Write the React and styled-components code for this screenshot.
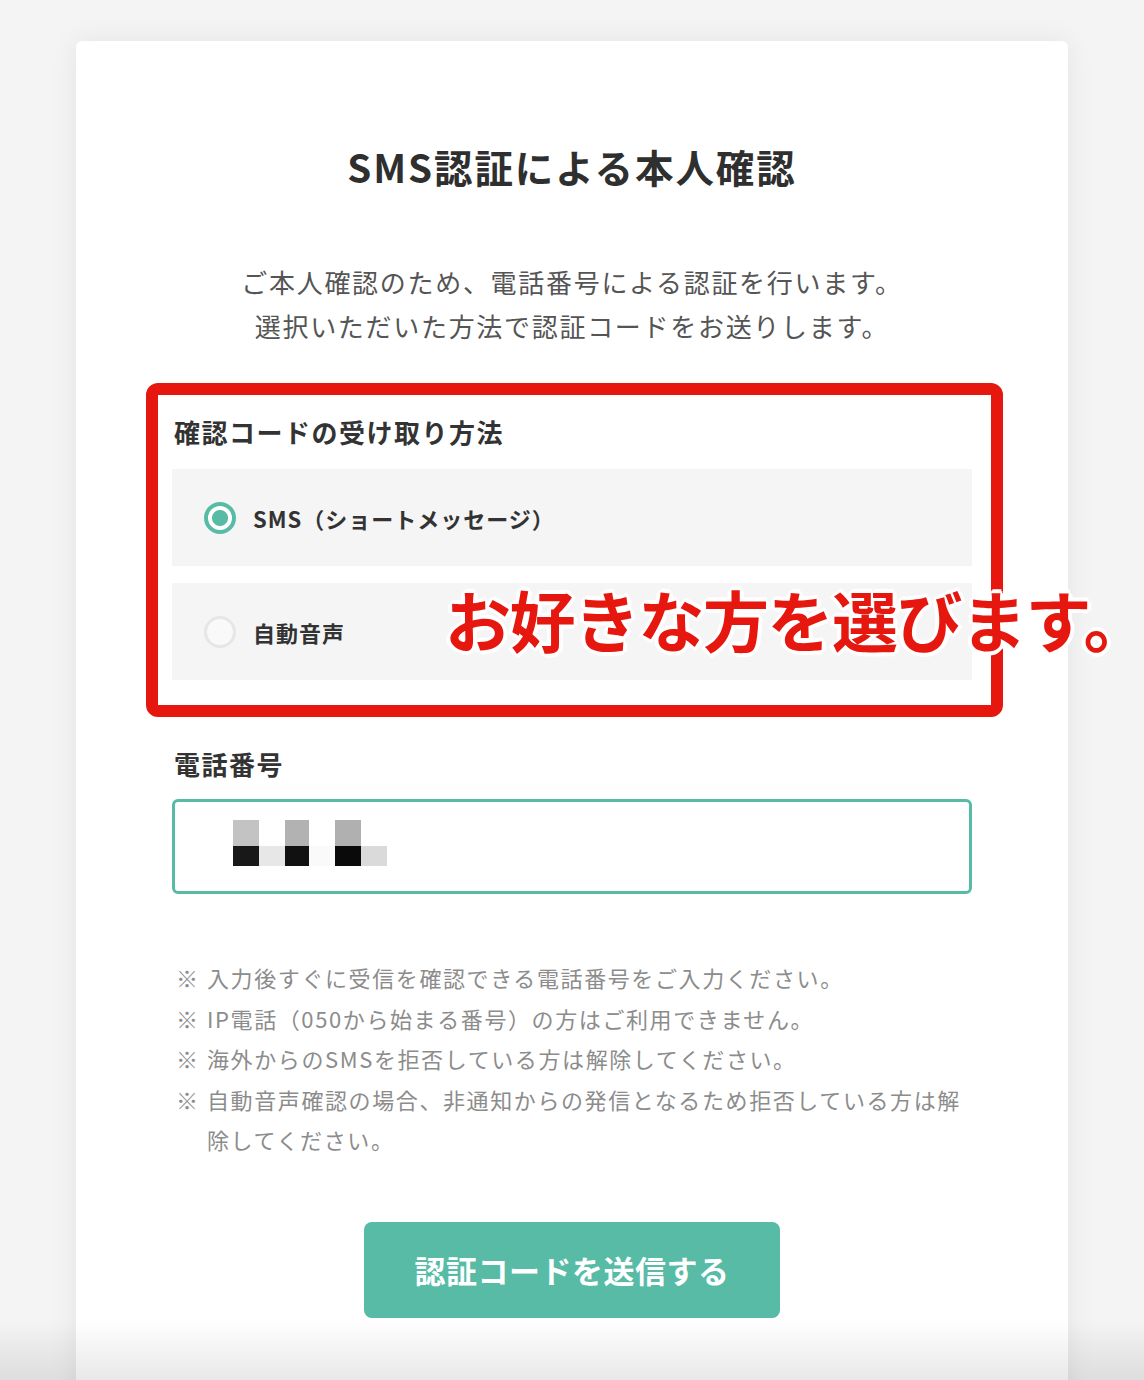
import { useState } from "react";
import styled, { createGlobalStyle } from "styled-components";

const GlobalStyle = createGlobalStyle`
  html, body {
    margin: 0;
    padding: 0;
    background: #f4f4f4;
  }
  body {
    font-family: "Noto Sans CJK JP", "Noto Sans", sans-serif;
    color: #333;
  }
`;

const METHODS = [
  { id: "sms", label: "SMS（ショートメッセージ）" },
  { id: "voice", label: "自動音声" },
];

const NOTES = [
  "入力後すぐに受信を確認できる電話番号をご入力ください。",
  "IP電話（050から始まる番号）の方はご利用できません。",
  "海外からのSMSを拒否している方は解除してください。",
  "自動音声確認の場合、非通知からの発信となるため拒否している方は解除してください。",
];

// blurred phone number, left to right, top row then bottom row
const MOSAIC = [
  "#c3c3c3", "#ffffff", "#b2b2b2", "#ffffff", "#b0b0b0", "#ffffff",
  "#181818", "#e7e7e7", "#111111", "#fafafa", "#0a0a0a", "#dadada",
];

export default function App() {
  const [method, setMethod] = useState("sms");

  return (
    <Page>
      <GlobalStyle />
      <Card>
        <Title>SMS認証による本人確認</Title>
        <Lead>
          ご本人確認のため、電話番号による認証を行います。
          <br />
          選択いただいた方法で認証コードをお送りします。
        </Lead>

        <MethodSection>
          <FieldLabel>確認コードの受け取り方法</FieldLabel>
          <Options>
            {METHODS.map((m) => (
              <Option key={m.id} onClick={() => setMethod(m.id)}>
                <Radio $checked={method === m.id} />
                <OptionText>{m.label}</OptionText>
              </Option>
            ))}
          </Options>
          <Callout>お好きな方を選びます。</Callout>
        </MethodSection>

        <PhoneSection>
          <FieldLabel>電話番号</FieldLabel>
          <PhoneField>
            <Mosaic>
              {MOSAIC.map((c, i) => (
                <MosaicCell key={i} $color={c} />
              ))}
            </Mosaic>
          </PhoneField>
        </PhoneSection>

        <Notes>
          {NOTES.map((n) => (
            <Note key={n}>
              <NoteMark>※</NoteMark>
              <span>{n}</span>
            </Note>
          ))}
        </Notes>

        <SubmitBtn type="button">認証コードを送信する</SubmitBtn>
      </Card>
      <BottomFade />
    </Page>
  );
}

const Page = styled.div`
  padding-top: 41px;
  display: flex;
  justify-content: center;
  min-height: 1380px;
  overflow: hidden;
`;

const Card = styled.main`
  width: 992px;
  box-sizing: border-box;
  padding: 100px 96px 120px;
  background: #fff;
  border-radius: 6px;
  box-shadow: 0 0 28px rgba(0, 0, 0, 0.07);
  display: flex;
  flex-direction: column;
  align-items: stretch;
`;

const Title = styled.h1`
  margin: 0;
  font-size: 38.5px;
  line-height: 50px;
  font-weight: 700;
  letter-spacing: 0.05em;
  text-align: center;
  color: #2f2f2f;
`;

const Lead = styled.p`
  margin: 69px 0 0;
  font-size: 26px;
  line-height: 44px;
  letter-spacing: 1.7px;
  text-align: center;
  color: #555;
`;

const MethodSection = styled.section`
  position: relative;
  margin-top: 67px;

  /* red annotation frame */
  &::before {
    content: "";
    position: absolute;
    top: -32px;
    left: -26px;
    right: -31px;
    bottom: -37px;
    border: 12px solid #e5170f;
    border-radius: 12px;
    pointer-events: none;
  }
`;

const FieldLabel = styled.h2`
  margin: 0;
  padding-left: 2px;
  font-size: 26px;
  line-height: 34px;
  font-weight: 700;
  letter-spacing: 1.5px;
  color: #333;
`;

const Options = styled.div`
  margin-top: 20px;
  display: flex;
  flex-direction: column;
  gap: 17px;
`;

const Option = styled.label`
  display: flex;
  align-items: center;
  gap: 17px;
  height: 97px;
  padding-left: 32px;
  background: #f5f5f5;
  cursor: pointer;
`;

const Radio = styled.span`
  width: 32px;
  height: 32px;
  box-sizing: border-box;
  border-radius: 50%;
  border: ${(p) => (p.$checked ? "4px solid #57bba6" : "3px solid #e6e6e6")};
  background: ${(p) =>
    p.$checked
      ? "radial-gradient(circle, #57bba6 0 7.5px, #fff 8.5px)"
      : "#f9f9f9"};
  flex-shrink: 0;
`;

const OptionText = styled.span`
  font-size: 22px;
  font-weight: 700;
  letter-spacing: 1px;
  color: #333;
`;

const Callout = styled.div`
  position: absolute;
  left: 273px;
  top: 170px;
  font-size: 66px;
  line-height: 1;
  font-weight: 700;
  letter-spacing: -1.5px;
  white-space: nowrap;
  color: #e5170f;
  text-shadow: 3px 0 0 #fff, -3px 0 0 #fff, 0 3px 0 #fff, 0 -3px 0 #fff,
    2px 2px 0 #fff, -2px 2px 0 #fff, 2px -2px 0 #fff, -2px -2px 0 #fff,
    4px 1px 0 #fff, -4px 1px 0 #fff, 1px 4px 0 #fff, 1px -4px 0 #fff;
`;

const PhoneSection = styled.section`
  margin-top: 67px;
  display: flex;
  flex-direction: column;
  gap: 18px;
`;

const PhoneField = styled.div`
  height: 95px;
  box-sizing: border-box;
  border: 3px solid #57bba6;
  border-radius: 6px;
  padding: 18px 0 0 58px;
  background: #fff;
`;

const Mosaic = styled.div`
  display: grid;
  grid-template-columns: 26px 26px 24px 26px 26px 26px;
  grid-template-rows: 26px 20px;
`;

const MosaicCell = styled.span`
  background: ${(p) => p.$color};
`;

const Notes = styled.ul`
  margin: 63px 0 0;
  padding: 0;
  list-style: none;
  font-size: 22px;
  line-height: 40.5px;
  letter-spacing: 1.6px;
  color: #8c8c8c;
`;

const Note = styled.li`
  display: flex;
`;

const NoteMark = styled.span`
  flex: 0 0 35px;
  letter-spacing: 0;
  padding-left: 4px;
  box-sizing: border-box;
`;

const SubmitBtn = styled.button`
  align-self: center;
  margin-top: 62px;
  width: 416px;
  height: 96px;
  border: none;
  border-radius: 8px;
  background: #57bba6;
  color: #fff;
  font-family: inherit;
  font-size: 31px;
  font-weight: 700;
  letter-spacing: 0.5px;
  cursor: pointer;
`;

const BottomFade = styled.div`
  position: fixed;
  left: 0;
  right: 0;
  bottom: 0;
  height: 60px;
  background: linear-gradient(rgba(0, 0, 0, 0), rgba(0, 0, 0, 0.09));
  pointer-events: none;
`;
